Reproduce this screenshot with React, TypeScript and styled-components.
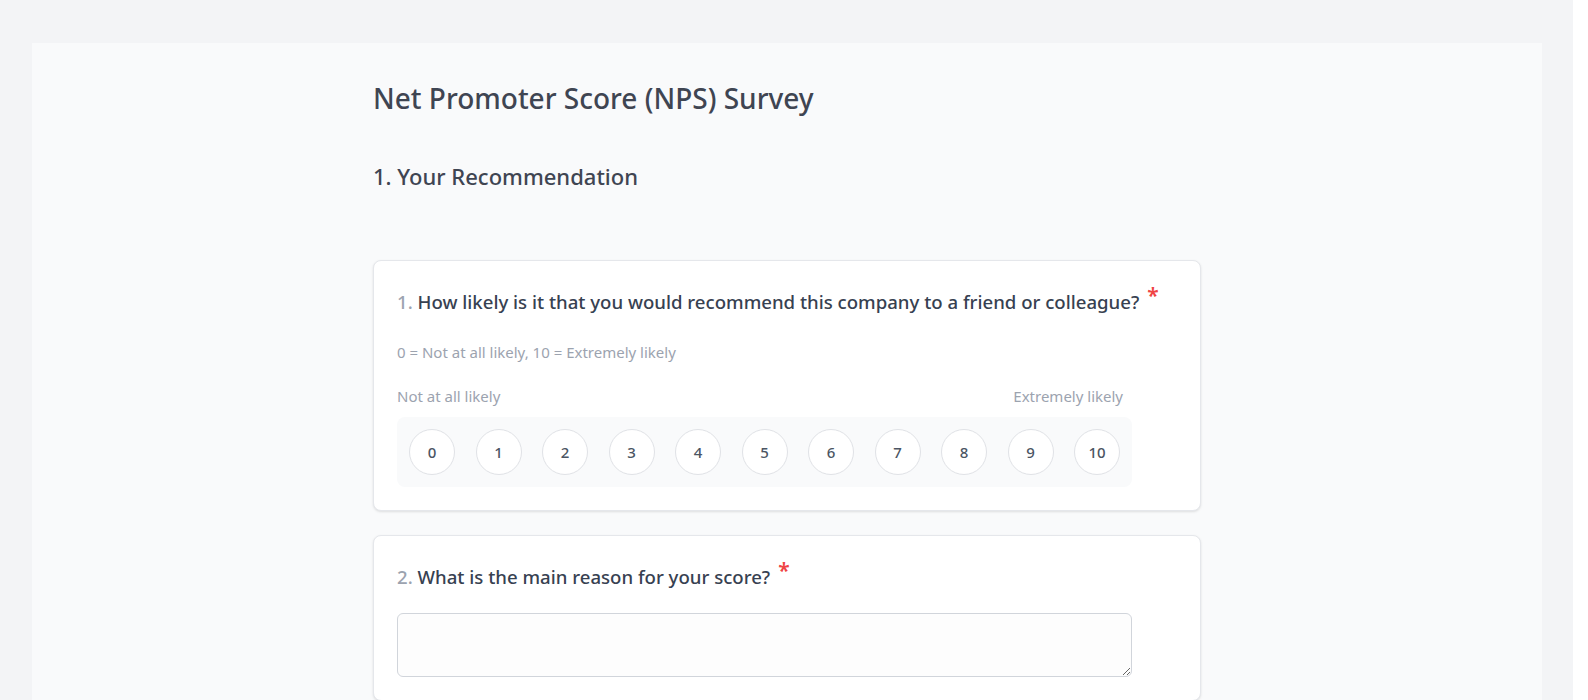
import React from "react";
import styled, { createGlobalStyle } from "styled-components";

const GlobalStyle = createGlobalStyle`
  html, body {
    margin: 0;
    padding: 0;
    background: #ffffff;
  }
  body {
    font-family: "Noto Sans", "Open Sans", sans-serif;
    color: #374151;
  }
`;

const scale = Array.from({ length: 11 }, (_, i) => i);

const App = () => {
  return (
    <>
      <GlobalStyle />
      <Page>
        <Panel>
          <Column>
            <Title>Net Promoter Score (NPS) Survey</Title>
            <SectionTitle>1. Your Recommendation</SectionTitle>

            <Card>
              <Question>
                <QNum>1.</QNum> How likely is it that you would recommend this
                company to a friend or colleague?
                <Required>*</Required>
              </Question>
              <Help>0 = Not at all likely, 10 = Extremely likely</Help>
              <ScaleLabels>
                <span>Not at all likely</span>
                <span>Extremely likely</span>
              </ScaleLabels>
              <ScaleRow>
                {scale.map((n) => (
                  <ScoreButton key={n} type="button">
                    {n}
                  </ScoreButton>
                ))}
              </ScaleRow>
            </Card>

            <Card>
              <Question>
                <QNum>2.</QNum> What is the main reason for your score?
                <Required>*</Required>
              </Question>
              <Reason rows={2} />
            </Card>
          </Column>
        </Panel>
      </Page>
    </>
  );
};

export default App;

const Page = styled.div`
  margin-right: 15px;
  min-height: 700px;
  background: #f3f4f6;
  padding: 43px 31px 0 32px;
  box-sizing: border-box;
  overflow: hidden;
`;

const Panel = styled.main`
  background: #f9fafb;
  min-height: 700px;
  display: flex;
  justify-content: center;
`;

const Column = styled.div`
  width: 828px;
  display: flex;
  flex-direction: column;
`;

const Title = styled.h1`
  margin: 35px 0 0;
  font-size: 28px;
  line-height: 40px;
  font-weight: 500;
  color: #3f4552;
`;

const SectionTitle = styled.h2`
  margin: 42px 0 0;
  font-size: 22px;
  line-height: 32px;
  font-weight: 500;
  color: #3f4552;
`;

const Card = styled.section`
  margin-top: 68px;
  background: #ffffff;
  border: 1px solid #e5e7eb;
  border-radius: 8px;
  box-shadow: 0 1px 3px rgba(0, 0, 0, 0.08), 0 1px 2px rgba(0, 0, 0, 0.04);
  padding: 27px 23px 23px;
  display: flex;
  flex-direction: column;

  & + & {
    margin-top: 24px;
  }
`;

const Question = styled.h3`
  margin: 0;
  font-size: 18.6px;
  line-height: 28px;
  font-weight: 500;
  color: #374151;
`;

const QNum = styled.span`
  color: #9ca3af;
`;

const Required = styled.span`
  color: #ef4444;
  margin-left: 8px;
  font-size: 21px;
  line-height: 0;
  font-weight: 600;
  vertical-align: 6px;
`;

const Help = styled.p`
  margin: 26px 0 0;
  font-size: 15px;
  line-height: 20px;
  color: #9ca3af;
`;

const ScaleLabels = styled.div`
  margin-top: 24px;
  width: 726px;
  display: flex;
  justify-content: space-between;
  font-size: 15px;
  line-height: 20px;
  color: #9ca3af;
`;

const ScaleRow = styled.div`
  margin-top: 11px;
  width: fit-content;
  display: flex;
  gap: 20.5px;
  padding: 12px;
  background: #f9fafb;
  border-radius: 8px;
`;

const ScoreButton = styled.button`
  width: 46px;
  height: 46px;
  border-radius: 50%;
  border: 1px solid #e0e2e6;
  background: #ffffff;
  color: #4b5563;
  font-family: "Noto Sans", sans-serif;
  font-size: 15px;
  font-weight: 500;
  padding: 0;
  cursor: pointer;
  display: flex;
  align-items: center;
  justify-content: center;
`;

const Reason = styled.textarea`
  margin-top: 22px;
  width: 735px;
  height: 64px;
  box-sizing: border-box;
  border: 1px solid #d1d5db;
  border-radius: 6px;
  background: #fdfdfd;
  font-family: "Noto Sans", sans-serif;
  font-size: 15px;
  padding: 8px 12px;
  resize: vertical;
`;
